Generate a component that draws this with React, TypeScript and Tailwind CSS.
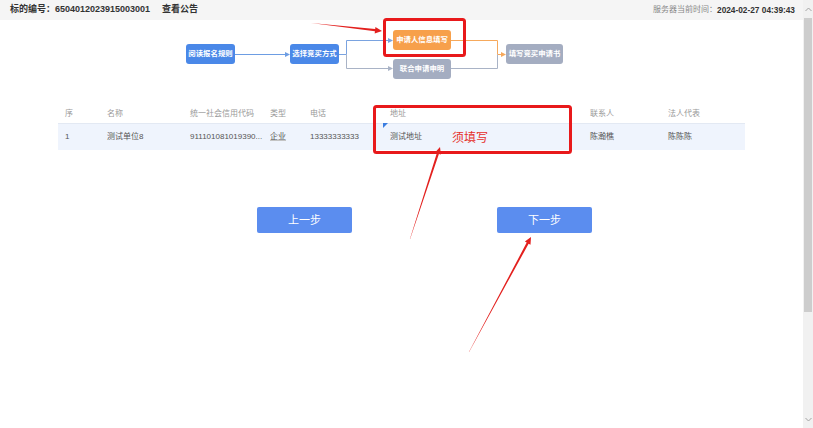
import React from "react";

function arrowPoints(x1: number, y1: number, x2: number, y2: number) {
  const dx = x2 - x1;
  const dy = y2 - y1;
  const len = Math.sqrt(dx * dx + dy * dy);
  const ux = dx / len;
  const uy = dy / len;
  const nx = -uy;
  const ny = ux;
  const h = 7;
  const w = 3.2;
  const bx = x2 - ux * h;
  const by = y2 - uy * h;
  const pts: [number, number][] = [
    [x1 + nx * 0.15, y1 + ny * 0.15],
    [bx + nx * 1.1, by + ny * 1.1],
    [bx + nx * w, by + ny * w],
    [x2, y2],
    [bx - nx * w, by - ny * w],
    [bx - nx * 1.1, by - ny * 1.1],
    [x1 - nx * 0.15, y1 - ny * 0.15],
  ];
  return pts.map((p) => `${p[0].toFixed(1)},${p[1].toFixed(1)}`).join(" ");
}

const font = { fontFamily: '"Liberation Sans", "Noto Sans CJK SC", sans-serif' };

export default function App() {
  return (
    <div className="relative w-[813px] h-[428px] bg-white overflow-hidden flex" style={font}>
      <div className="flex-1 flex flex-col">
        {/* header */}
        <div className="h-[20px] bg-[#f5f5f5] flex items-center justify-between pl-[10px] pr-[8px]">
          <div className="flex items-center text-[9px] font-bold text-[#333]">
            <span>标的编号：6504012023915003001</span>
            <span className="ml-[12px]">查看公告</span>
          </div>
          <div className="flex items-center text-[8px] text-[#888]">
            <span>服务器当前时间：</span>
            <span className="font-bold text-[#333] text-[8.3px]">2024-02-27 04:39:43</span>
          </div>
        </div>

        {/* flow diagram */}
        <div className="relative h-[84px]">
          <svg className="absolute left-0 top-0" width="803" height="84">
            <g fill="none" strokeWidth="1">
              <line x1="235" y1="34.5" x2="287" y2="34.5" stroke="#6d9de3" />
              <polygon points="290,34.5 285,32 285,37" fill="#6d9de3" stroke="none" />
              <polyline points="339,34.5 346.5,34.5 346.5,20.5 390,20.5" stroke="#7aa3e0" />
              <polygon points="393,20.5 388,18 388,23" fill="#7aa3e0" stroke="none" />
              <polyline points="346.5,34.5 346.5,48.5 390,48.5" stroke="#a9b3c6" />
              <polygon points="393,48.5 388,46 388,51" fill="#a9b3c6" stroke="none" />
              <polyline points="451,20.5 497.5,20.5 497.5,34.5 503,34.5" stroke="#f6a95c" />
              <polygon points="506,34.5 501,32 501,37" fill="#f6a95c" stroke="none" />
              <polyline points="451,48.5 497.5,48.5 497.5,34.5" stroke="#a9b3c6" />
            </g>
          </svg>
          <div className="absolute left-[186px] top-[24px] w-[49px] h-[20px] rounded-[3px] bg-[#4a88e8] text-white text-[7.4px] font-bold flex items-center justify-center">
            阅读报名规则
          </div>
          <div className="absolute left-[290px] top-[24px] w-[49px] h-[20px] rounded-[3px] bg-[#4a88e8] text-white text-[7.4px] font-bold flex items-center justify-center">
            选择竞买方式
          </div>
          <div className="absolute left-[393px] top-[10px] w-[58px] h-[20px] rounded-[3px] bg-[#f7a04b] text-white text-[7.4px] font-bold flex items-center justify-center">
            申请人信息填写
          </div>
          <div className="absolute left-[393px] top-[39px] w-[58px] h-[20px] rounded-[3px] bg-[#a4adc1] text-white text-[7.4px] font-bold flex items-center justify-center">
            联合申请申明
          </div>
          <div className="absolute left-[506px] top-[24px] w-[57px] h-[20px] rounded-[3px] bg-[#a4adc1] text-white text-[7.4px] font-bold flex items-center justify-center">
            填写竞买申请书
          </div>
        </div>

        {/* table */}
        <div className="ml-[58px] w-[687px] text-[8px]">
          <div className="grid grid-cols-[49px_83px_80px_40px_80px_200px_78px_1fr] h-[19px] items-center text-[#999]">
            <div className="pl-[7px]">序</div>
            <div>名称</div>
            <div>统一社会信用代码</div>
            <div>类型</div>
            <div>电话</div>
            <div>地址</div>
            <div>联系人</div>
            <div>法人代表</div>
          </div>
          <div className="grid grid-cols-[49px_83px_80px_40px_80px_200px_78px_1fr] h-[27px] items-center text-[#555] bg-[#eff4fd] border-t border-[#e3e9f3]">
            <div className="pl-[7px]">1</div>
            <div>测试单位8</div>
            <div>911101081019390...</div>
            <div className="underline decoration-[#c4c4c4]">企业</div>
            <div>13333333333</div>
            <div>测试地址</div>
            <div>陈瀚樵</div>
            <div>陈陈陈</div>
          </div>
        </div>

        {/* buttons */}
        <div className="flex mt-[57px] ml-[257px] gap-[145px]">
          <button className="w-[95px] h-[26px] rounded-[2px] bg-[#5b8def] text-white text-[11px] flex items-center justify-center">
            上一步
          </button>
          <button className="w-[95px] h-[26px] rounded-[2px] bg-[#5b8def] text-white text-[11px] flex items-center justify-center">
            下一步
          </button>
        </div>
      </div>

      {/* scrollbar */}
      <div className="w-[10px] h-full bg-[#f1f1f1] flex flex-col items-center">
        <div className="h-[18px] flex items-center justify-center">
          <svg width="7" height="5" viewBox="0 0 7 5">
            <polyline points="0.5,4 3.5,1 6.5,4" fill="none" stroke="#a3a3a3" strokeWidth="1" />
          </svg>
        </div>
        <div className="w-[8px] h-[294px] bg-[#cdcdcd]" />
        <div className="flex-1" />
        <div className="h-[18px] flex items-center justify-center">
          <svg width="7" height="5" viewBox="0 0 7 5">
            <polyline points="0.5,1 3.5,4 6.5,1" fill="none" stroke="#a3a3a3" strokeWidth="1" />
          </svg>
        </div>
      </div>

      {/* annotations overlay */}
      <div className="absolute left-[383px] top-[123px] w-0 h-0 border-t-[5px] border-t-[#3b7de0] border-r-[5px] border-r-transparent" />
      <div className="absolute left-[452px] top-[131px] text-[12px] leading-[14px] text-[#e6302b]">须填写</div>
      <svg className="absolute left-0 top-0 pointer-events-none" width="813" height="428">
        <rect x="384.5" y="19.5" width="80" height="36" rx="2" fill="none" stroke="#e8191b" strokeWidth="3" />
        <rect x="374.5" y="106.5" width="196" height="46" rx="2" fill="none" stroke="#e8191b" strokeWidth="3" />
        <polygon points={arrowPoints(311, 23, 382, 31)} fill="#e3201e" />
        <polygon points={arrowPoints(410, 239, 440, 147)} fill="#e3201e" />
        <polygon points={arrowPoints(469, 352, 531, 237)} fill="#e3201e" />
      </svg>
    </div>
  );
}
